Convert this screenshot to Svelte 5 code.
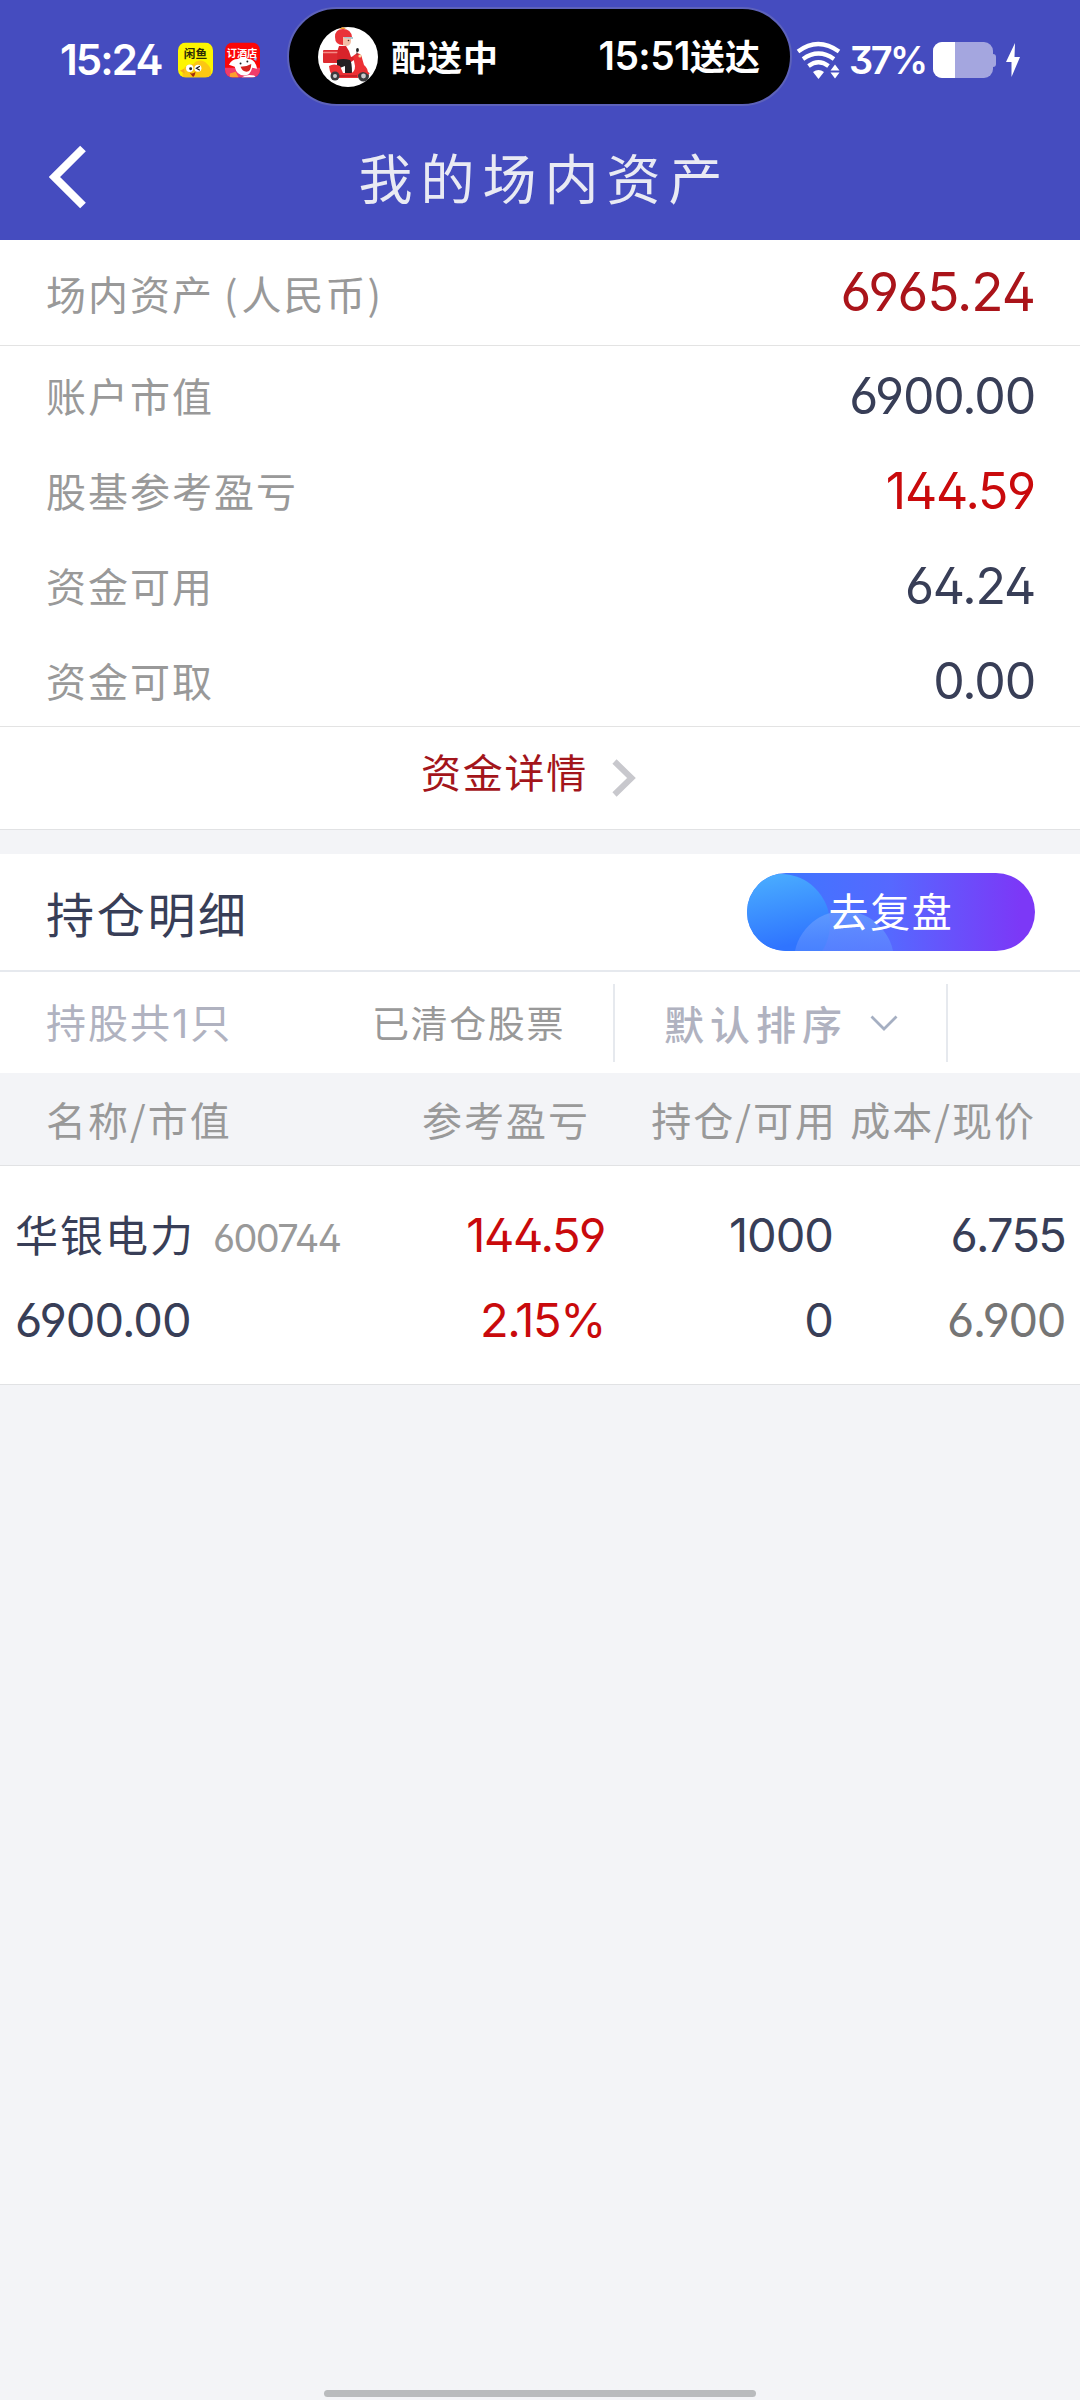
<script lang="ts">
  interface Row {
    label: string;
    value: string;
    up?: boolean;
  }

  const rows: Row[] = [
    { label: '账户市值', value: '6900.00' },
    { label: '股基参考盈亏', value: '144.59', up: true },
    { label: '资金可用', value: '64.24' },
    { label: '资金可取', value: '0.00' }
  ];

  const columns = ['名称/市值', '参考盈亏', '持仓/可用', '成本/现价'];

  const holdings = [
    {
      name: '华银电力',
      code: '600744',
      marketValue: '6900.00',
      profit: '144.59',
      profitRate: '2.15%',
      amount: '1000',
      available: '0',
      cost: '6.755',
      price: '6.900'
    }
  ];
</script>

<div class="page">
  <header class="top">
    <div class="status">
      <span class="clock num">15:24</span>
      <svg class="app-icon" viewBox="0 0 36 36">
        <defs>
          <clipPath id="round"><rect width="36" height="36" rx="8" /></clipPath>
        </defs>
        <g clip-path="url(#round)">
          <rect width="36" height="36" fill="#fdf500" />
          <path d="M5 36c-2-10 4-14 11-14 4-5 11-4 14 0 4 3 5 9 3 14z" fill="#fcc713" />
          <path d="M2 29l4-2 1 5z" fill="#f7a81b" />
          <circle cx="12" cy="26.500" r="3.800" fill="#fff" />
          <circle cx="20.500" cy="26.500" r="3.600" fill="#fff" />
          <circle cx="13" cy="27" r="1.500" fill="#222" />
          <path d="M22.500 24.500l-3.500 2 3.500 2" fill="none" stroke="#222" stroke-width="1.300" />
          <path d="M12 31q3 2 6-1-1 6-3 5z" fill="#a32c0e" />
          <text x="18" y="16" text-anchor="middle" font-size="12" font-weight="700" fill="#2b2b05">闲鱼</text>
        </g>
      </svg>
      <svg class="app-icon" viewBox="0 0 36 36">
        <g clip-path="url(#round)">
          <rect width="36" height="36" fill="#fb0607" />
          <rect y="26" width="36" height="10" fill="#f13c6a" />
          <path d="M4 23q3-6 9-6 6-3 11 0 7 0 9 10l-5-1q-2 8-8 8-8 0-10-9z" fill="#fff" />
          <path d="M16 25q6 0 11-3 0 8-5 8-4 0-6-5z" fill="#d5231f" />
          <circle cx="16" cy="21.500" r="1" fill="#222" />
          <circle cx="23" cy="19.500" r="1" fill="#222" />
          <path d="M29 17l4-2-1 4z" fill="#7fb7ff" />
          <path d="M5 36v-4l6-2 3 6z" fill="#fca02d" />
          <path d="M17 36q5-4 13-2l2 2z" fill="#fff" />
          <text x="17.500" y="14.500" text-anchor="middle" font-size="10.500" font-weight="700" fill="#fff">订酒店</text>
        </g>
      </svg>

      <div class="island">
        <svg class="rider" viewBox="0 0 60 60">
          <circle cx="30" cy="30" r="30" fill="#fff" />
          <path d="M21 2l4-2 3 2z" fill="#f39a2b" />
          <rect x="5" y="23" width="16" height="13" rx="1" fill="#dd2a30" />
          <path d="M5 25.500h16" stroke="#f58b86" stroke-width="1.500" />
          <path d="M21 19h7l3 5 2 6 7-3 2 2-9 6H20q-2-9 1-16z" fill="#d8232a" />
          <path d="M24 9h9v6q-1 4-5 4l-4-1z" fill="#f4c0a8" />
          <circle cx="30.500" cy="13.500" r="0.800" fill="#4a2a22" />
          <path d="M17 10q0-8 8-8 8 0 9 8H25v8q-8 0-8-8z" fill="#ea3338" />
          <path d="M26 10h9v2l-9-1z" fill="#a9c6d0" />
          <path d="M19 33q6-2 13 0 2 2 2 13h-7v-7l-8 3z" fill="#241f22" />
          <path d="M11 39q5-3 11 0l3 7h8q4-1 4-7l-2-10 4-3q5 1 5 5l2 7q4 3 4 9-6-3-9 3l-1 1H19q-7-1-8-12z" fill="#ec3034" />
          <path d="M20 49h19" stroke="#b91d24" stroke-width="1.500" />
          <circle cx="17" cy="49" r="4.500" fill="#3b3b3e" />
          <circle cx="17" cy="49" r="2" fill="#c9c9cc" />
          <circle cx="45.500" cy="49" r="5.500" fill="#3b3b3e" />
          <circle cx="45.500" cy="49" r="2.400" fill="#c9c9cc" />
          <path d="M39 47q6-6 12 0" fill="none" stroke="#ec3034" stroke-width="2" />
          <path d="M39 28v-5" stroke="#444" stroke-width="0.800" />
          <ellipse cx="39.500" cy="23" rx="1.400" ry="2" fill="#222" />
          <circle cx="42" cy="29" r="1.600" fill="#f6d9a8" />
        </svg>
        <span class="island-state">配送中</span>
        <span class="island-eta"><span class="num">15:51</span>送达</span>
      </div>

      <svg class="wifi" viewBox="0 0 46 38">
        <g fill="none" stroke="#fff" stroke-width="4.200">
          <path d="M2 10.500q20-15 41 0" />
          <path d="M7 18q15.500-11 31 0" />
          <path d="M12.500 25q10-7.500 20 0" />
        </g>
        <path d="M17 31q5.500-4 11 0l-5.500 7z" fill="#fff" />
        <path d="M34.500 29.500l4.500-6 4.500 6zM34.500 31.500l4.500 6 4.500-6z" fill="#fff" />
      </svg>
      <span class="percent num">37%</span>
      <svg class="battery" viewBox="0 0 64 36">
        <rect width="60" height="36" rx="9" fill="#a4a6df" />
        <path d="M60 12q3 0 3 3v7q0 3-3 3z" fill="#a4a6df" />
        <path d="M22 0H9a9 9 0 0 0-9 9v18a9 9 0 0 0 9 9h13z" fill="#fff" />
      </svg>
      <svg class="bolt" viewBox="0 0 14 34">
        <path d="M9 0L0 19h5.500L5.500 34 14 14H8.500z" fill="#fff" />
      </svg>
    </div>

    <div class="nav">
      <svg class="back" viewBox="0 0 38 64">
        <path d="M34 3.500L5.500 32 34 60.500" fill="none" stroke="#fff" stroke-width="8" />
      </svg>
      <h1 class="title">我的场内资产</h1>
    </div>
  </header>

  <section class="summary">
    <div class="row total">
      <span class="label">场内资产<span class="paren">(</span>人民币<span>)</span></span>
      <span class="value num">6965.24</span>
    </div>
    <div class="rows">
      {#each rows as row}
        <div class="row">
          <span class="label">{row.label}</span>
          <span class="value num" class:up={row.up}>{row.value}</span>
        </div>
      {/each}
    </div>
    <div class="detail">
      <span>资金详情</span>
      <svg viewBox="0 0 24 38">
        <path d="M2.500 2.500L19.500 19 2.500 35.500" fill="none" stroke="#c8c8cd" stroke-width="6" />
      </svg>
    </div>
  </section>

  <section class="positions">
    <div class="head">
      <h2>持仓明细</h2>
      <button class="review">
        <svg class="bubbles" viewBox="0 0 288 78">
          <defs>
            <linearGradient id="big" x1="0" y1="0" x2="0.200" y2="1">
              <stop offset="0" stop-color="#4cb2ff" />
              <stop offset="0.800" stop-color="#2f74ff" />
            </linearGradient>
            <linearGradient id="small" x1="0" y1="0" x2="0" y2="1">
              <stop offset="0" stop-color="#6aa0ff" stop-opacity="0.750" />
              <stop offset="0.600" stop-color="#5c86ff" stop-opacity="0.400" />
            </linearGradient>
          </defs>
          <ellipse cx="34" cy="51" rx="49" ry="50" fill="url(#big)" />
          <circle cx="97" cy="88" r="50" fill="url(#small)" />
        </svg>
        <span>去复盘</span>
      </button>
    </div>

    <div class="filters">
      <span class="count">持股共<span class="num">1</span>只</span>
      <span class="cleared">已清仓股票</span>
      <div class="sort">
        <span>默认排序</span>
        <svg viewBox="0 0 28 16">
          <path d="M1.500 1.500L14 14 26.500 1.500" fill="none" stroke="#a5afc2" stroke-width="2.800" />
        </svg>
      </div>
    </div>

    <div class="grid columns">
      {#each columns as column}
        <span>{column}</span>
      {/each}
    </div>

    {#each holdings as item}
      <div class="holding">
        <div class="grid line">
          <span class="name">{item.name}<small class="num">{item.code}</small></span>
          <span class="num up">{item.profit}</span>
          <span class="num">{item.amount}</span>
          <span class="num cost">{item.cost}</span>
        </div>
        <div class="grid line">
          <span class="num">{item.marketValue}</span>
          <span class="num up">{item.profitRate}</span>
          <span class="num">{item.available}</span>
          <span class="num price">{item.price}</span>
        </div>
      </div>
    {/each}
  </section>

  <div class="home-bar"></div>
</div>

<style>
  :global(body) {
    background: #f3f4f7;
  }
  .page {
    display: flex;
    flex-direction: column;
    width: 1080px;
    height: 2400px;
    background: #f3f4f7;
    color: #383e57;
    font-family: 'Noto Sans CJK SC', sans-serif;
    font-weight: 400;
    line-height: 1;
    overflow: hidden;
  }
  h1,
  h2 {
    margin: 0;
    font-weight: 400;
  }
  svg {
    display: block;
    flex-shrink: 0;
  }
  .num {
    font-family: Inter, sans-serif;
    font-feature-settings: 'ss01', 'cv03', 'cv04';
  }
  .up {
    color: #c90a0c;
  }

  .top {
    height: 240px;
    background: #454cbf;
    color: #fff;
  }
  .status {
    display: flex;
    align-items: center;
    height: 120px;
    padding-left: 60px;
  }
  .clock {
    width: 118px;
    font-size: 42px;
    font-weight: 600;
    letter-spacing: -1.9px;
  }
  .app-icon {
    width: 35px;
    height: 36px;
    margin-right: 12px;
  }
  .island {
    box-sizing: border-box;
    display: flex;
    align-items: center;
    width: 505px;
    height: 99px;
    margin: -7px 4px 0 15px;
    padding: 0 30px 0 29px;
    border: 2px solid #5d62bb;
    border-radius: 50px;
    background: #000;
    font-size: 35px;
    font-weight: 700;
  }
  .rider {
    width: 60px;
    height: 60px;
    margin-right: 13px;
  }
  .island-state {
    padding-bottom: 3px;
    letter-spacing: 1px;
  }
  .island-eta {
    margin-left: auto;
    padding-bottom: 2px;
    white-space: nowrap;
  }
  .island-eta .num {
    font-size: 39px;
    font-weight: 600;
    letter-spacing: -0.6px;
  }
  .wifi {
    width: 46px;
    height: 38px;
    margin-right: 7px;
  }
  .percent {
    width: 84px;
    font-size: 38px;
    font-weight: 600;
    letter-spacing: -2.6px;
  }
  .battery {
    width: 64px;
    height: 36px;
    margin-right: 9px;
  }
  .bolt {
    width: 14px;
    height: 34px;
  }
  .nav {
    display: flex;
    align-items: center;
    height: 114px;
    padding-left: 49px;
  }
  .back {
    width: 38px;
    height: 64px;
  }
  .title {
    flex: 1;
    padding-right: 78px;
    text-align: center;
    font-size: 54px;
    letter-spacing: 8px;
    color: #e9eaf3;
  }

  .summary {
    height: 589px;
    border-bottom: 1px solid #e1e2e4;
    background: #fff;
  }
  .row {
    display: flex;
    align-items: center;
    justify-content: space-between;
    height: 93px;
    padding: 2px 45px 0 46px;
  }
  .row.total {
    height: 105px;
    padding-top: 0;
    border-bottom: 1px solid #e3e3e3;
  }
  .label {
    font-size: 40px;
    letter-spacing: 2px;
    color: #999;
  }
  .paren {
    margin: 0 2px 0 10px;
  }
  .value {
    margin-top: 2px;
    font-size: 50px;
    letter-spacing: -1.2px;
  }
  .total .value {
    margin-top: 0;
    font-size: 53px;
    letter-spacing: -1px;
    color: #aa141a;
  }
  .rows {
    height: 380px;
    border-bottom: 1px solid #e3e3e3;
  }
  .detail {
    display: flex;
    align-items: center;
    justify-content: center;
    gap: 24px;
    height: 88px;
    padding-right: 23px;
    font-size: 40px;
    letter-spacing: 1.8px;
    color: #a3151b;
  }
  .detail svg {
    width: 24px;
    height: 38px;
    margin-top: 13px;
  }

  .positions {
    margin-top: 24px;
    border-bottom: 1px solid #e1e2e4;
    background: #fff;
  }
  .head {
    display: flex;
    align-items: center;
    justify-content: space-between;
    height: 116px;
    padding: 0 45px 0 46px;
    border-bottom: 2px solid #e6e9ee;
  }
  h2 {
    font-size: 48px;
    letter-spacing: 2.7px;
  }
  .review {
    position: relative;
    width: 288px;
    height: 78px;
    padding: 0 0 4px;
    border: 0;
    border-radius: 39px;
    background: linear-gradient(90deg, #377bff, #5668ff 50%, #7c38f7 95%);
    overflow: hidden;
    font: inherit;
    font-size: 40px;
    letter-spacing: 1.7px;
    color: #fff;
  }
  .bubbles {
    position: absolute;
    inset: 0;
  }
  .review span {
    position: relative;
  }
  .filters {
    display: flex;
    align-items: center;
    height: 101px;
    padding-left: 46px;
    font-size: 40px;
    color: #b0b2c0;
  }
  .count {
    width: 326px;
    letter-spacing: 2px;
  }
  .cleared {
    width: 241px;
    font-size: 37px;
    letter-spacing: 1.6px;
    color: #999;
  }
  .sort {
    display: flex;
    align-items: center;
    gap: 22px;
    width: 282px;
    height: 78px;
    padding-left: 49px;
    border: solid #e6e9ee;
    border-width: 0 2px;
    font-weight: 500;
    letter-spacing: 6px;
  }
  .sort svg {
    width: 28px;
    height: 16px;
  }
  .grid {
    display: grid;
    align-items: center;
    text-align: right;
  }
  .grid > :first-child {
    text-align: left;
  }
  .columns {
    grid-template-columns: 300px 244px 247px 199px;
    height: 92px;
    padding: 0 44px 0 46px;
    border-bottom: 1px solid #e1e2e4;
    background: #f3f4f7;
    font-size: 40px;
    letter-spacing: 2px;
    color: #999;
  }
  .holding {
    padding: 26px 15px 22px;
  }
  .line {
    grid-template-columns: 340px 250px 228px 232px;
    height: 85px;
    font-size: 47px;
    letter-spacing: -1px;
  }
  .line .up {
    letter-spacing: -1.4px;
  }
  .name {
    padding-bottom: 1px;
    font-size: 43px;
    letter-spacing: 2px;
  }
  .name small {
    margin-left: 18px;
    font-size: 38px;
    letter-spacing: -1.7px;
    color: #999;
  }
  .line .cost {
    letter-spacing: -1.8px;
  }
  .line .price {
    letter-spacing: -1.4px;
    color: #757575;
  }

  .home-bar {
    width: 432px;
    height: 7px;
    margin: auto auto 3px;
    border-radius: 4px;
    background: #b9bbbd;
  }
</style>
